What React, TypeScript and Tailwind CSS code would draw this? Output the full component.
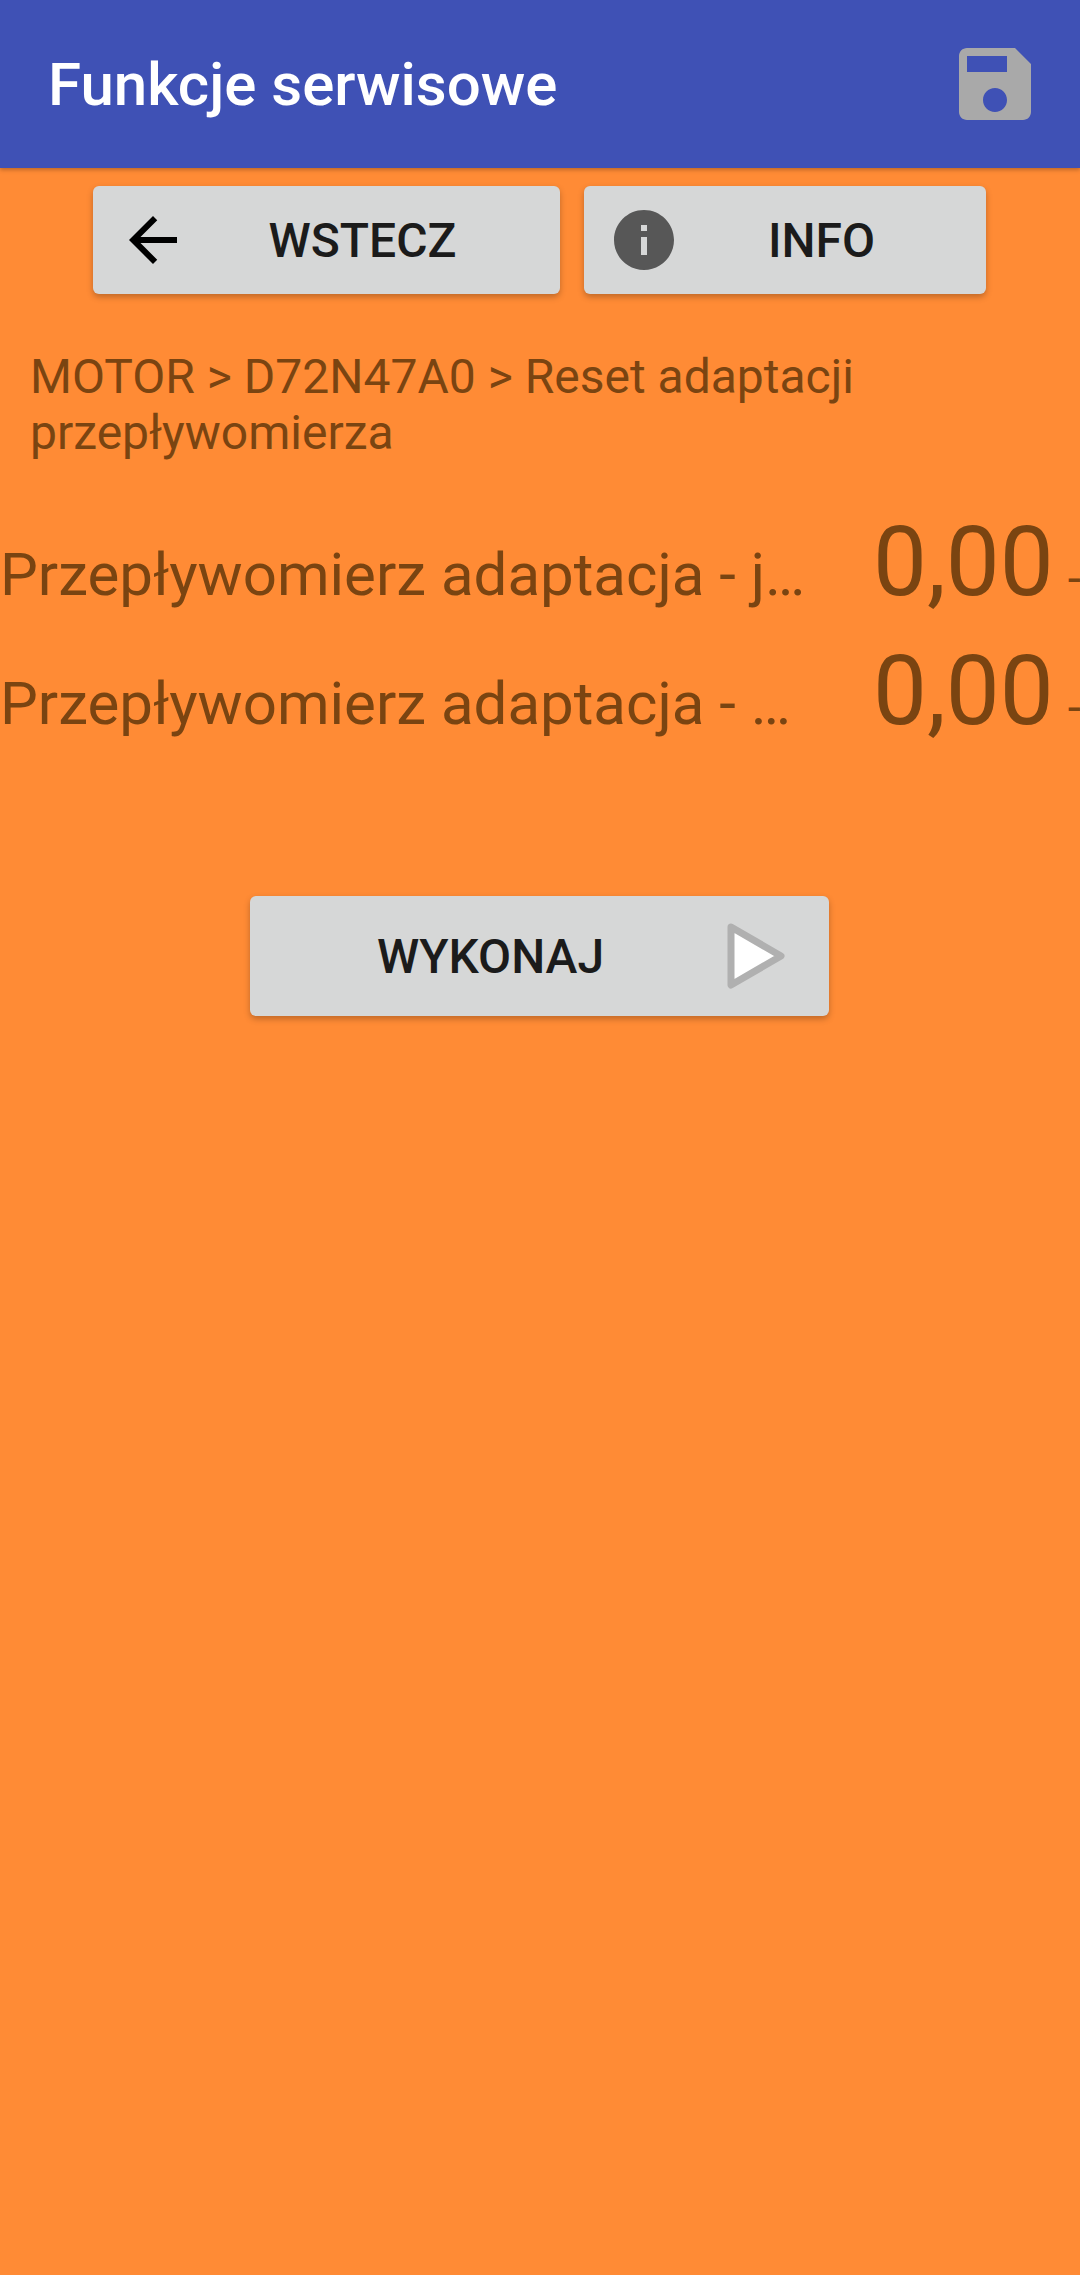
const font = "font-['Roboto',sans-serif]";

const rows = ['Przepływomierz adaptacja - j…', 'Przepływomierz adaptacja - …'];

const ActionButton = ({ label, className, children }: { label: string; className: string; children?: React.ReactNode }) => (
  <div className={`relative flex items-center justify-center bg-[#d6d7d7] rounded-[6px] shadow-[0_3px_6px_rgba(0,0,0,0.25)] text-[#1b1b1b] font-medium text-[48px] pt-[2px] ${className}`}>
    <span className="leading-none">{label}</span>
    {children}
  </div>
);

export default function App() {
  return (
    <div className={`${font} w-[1080px] h-[2275px] bg-[#ff8b35] overflow-hidden flex flex-col`}>
      {/* Toolbar */}
      <header className="h-[168px] shrink-0 bg-[#3f51b5] flex items-center justify-between pl-[48px] pr-[37px] shadow-[0_2px_4px_rgba(0,0,0,0.25)]">
        <h1 className="text-white font-medium text-[60px] leading-none mt-[1px]">Funkcje serwisowe</h1>
        <svg viewBox="0 0 24 24" className="w-[96px] h-[96px]" fill="#a9a9a9">
          <path d="M17 3H5c-1.11 0-2 .9-2 2v14c0 1.1.89 2 2 2h14c1.1 0 2-.9 2-2V7l-4-4zm-5 16c-1.66 0-3-1.34-3-3s1.34-3 3-3 3 1.34 3 3-1.34 3-3 3zm3-10H5V5h10v4z" />
        </svg>
      </header>

      {/* Top buttons */}
      <div className="flex gap-[24px] pl-[93px] pt-[18px]">
        <ActionButton label="WSTECZ" className="w-[467px] h-[108px] pl-[72px]">
          <svg viewBox="0 0 24 24" className="absolute left-[24px] top-[18px] w-[72px] h-[72px]" fill="#000">
            <path d="M20 11H7.83l5.59-5.59L12 4l-8 8 8 8 1.41-1.41L7.83 13H20v-2z" />
          </svg>
        </ActionButton>
        <ActionButton label="INFO" className="w-[402px] h-[108px] pl-[73px]">
          <svg viewBox="0 0 24 24" className="absolute left-[24px] top-[18px] w-[72px] h-[72px]" fill="#575757">
            <path d="M12 2C6.48 2 2 6.48 2 12s4.48 10 10 10 10-4.48 10-10S17.52 2 12 2zm1 15h-2v-6h2v6zm0-8h-2V7h2v2z" />
          </svg>
        </ActionButton>
      </div>

      {/* Breadcrumb */}
      <p className="mt-[55px] ml-[30px] w-[900px] text-[48px] leading-[56px] text-[#7a4411]">
        MOTOR &gt; D72N47A0 &gt; Reset adaptacji przepływomierza
      </p>

      {/* Values */}
      <div className="mt-[37px] flex flex-col text-[#7a4411]">
        {rows.map((label) => (
          <div key={label} className="h-[129px] flex items-baseline whitespace-nowrap">
            <span className="w-[873px] shrink-0 text-[60px] leading-[129px]">{label}</span>
            <span className="text-[96px] leading-[129px]">0,00</span>
            <span className="ml-[14px] text-[48px] leading-none">-</span>
          </div>
        ))}
      </div>

      {/* Execute */}
      <div className="mt-[140px] pl-[250px]">
        <ActionButton label="WYKONAJ" className="w-[579px] h-[120px] pr-[98px]">
          <svg viewBox="0 0 60 66" className="absolute left-[477px] top-[27px] w-[60px] h-[66px]">
            <path d="M4 4 L54 33 L4 62 Z" fill="#fff" stroke="#b0b0b0" strokeWidth="7" strokeLinejoin="round" />
          </svg>
        </ActionButton>
      </div>
    </div>
  );
}
